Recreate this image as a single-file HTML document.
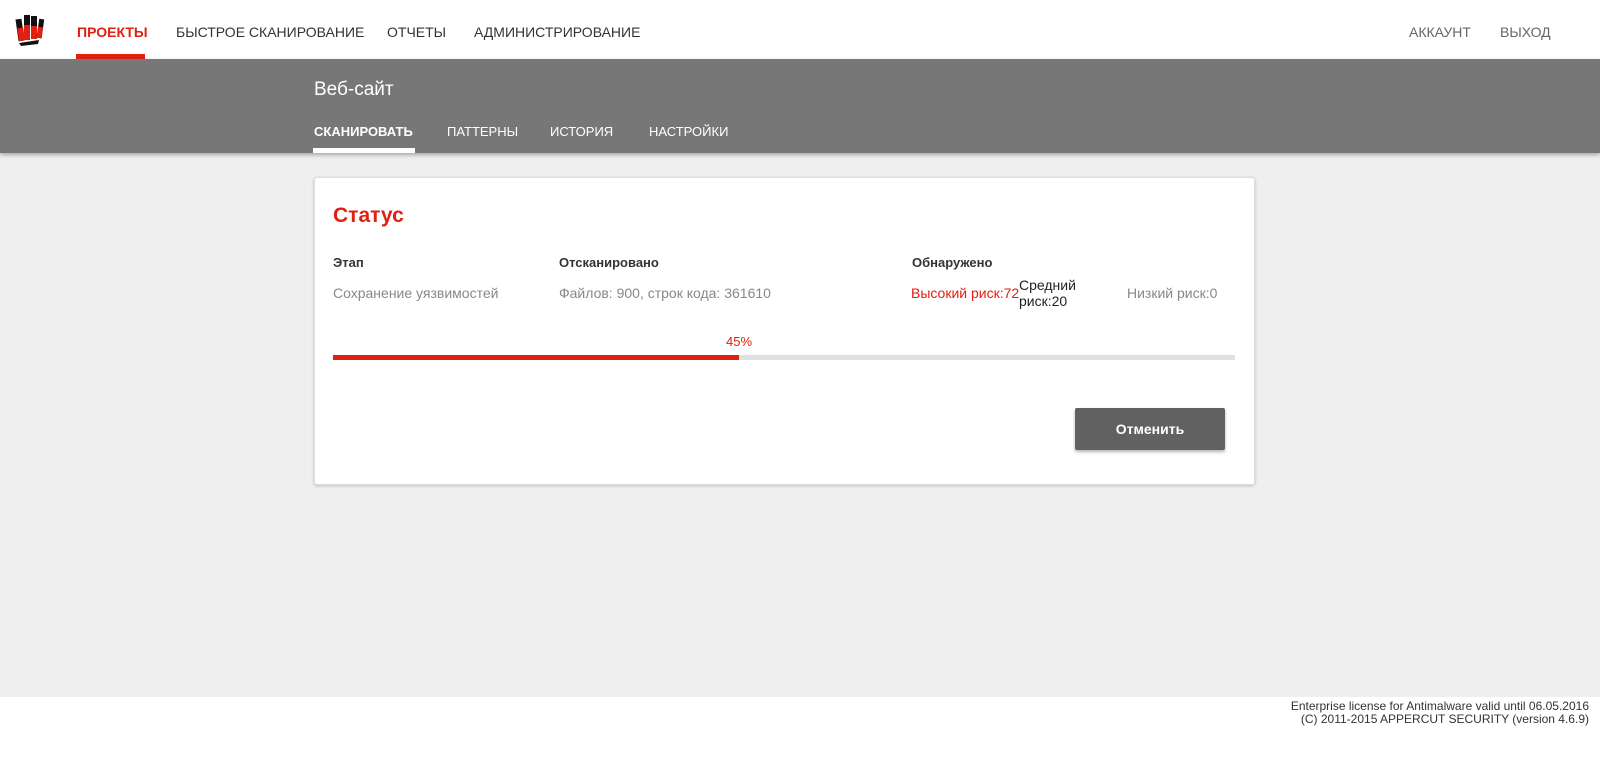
<!DOCTYPE html>
<html><head><meta charset="utf-8"><style>
*{margin:0;padding:0;box-sizing:border-box}
body{width:1600px;height:765px;background:#efefef;font-family:"Liberation Sans",Arial,sans-serif;position:relative;overflow:hidden}
.top{position:absolute;left:0;top:0;width:1600px;height:59px;background:#fff}
.top a{position:absolute;top:24px;font-size:14px;color:#333;text-decoration:none}
.sub{position:absolute;left:0;top:59px;width:1600px;height:94px;background:#777;box-shadow:0 2px 4px rgba(0,0,0,.3)}
.sub .t{position:absolute;left:314px;top:20px;color:#fff;font-size:19px}
.sub a{position:absolute;top:65px;color:#fff;font-size:13px}
.card{position:absolute;left:314px;top:177px;width:941px;height:308px;background:#fff;border:1px solid #ddd;border-radius:3px;box-shadow:0 1px 3px rgba(0,0,0,.2)}
.abs{position:absolute}
.h{font-weight:bold;font-size:13px;color:#333;top:77px}
.v{font-size:14px;color:#888;top:107px}
.foot{position:absolute;left:0;top:697px;width:1600px;height:68px;background:#fff}
.foot div{position:absolute;right:11px;top:3px;text-align:right;font-size:12px;color:#333;line-height:13px}
</style></head><body>
<div class="top">
<svg class="abs" style="left:15px;top:13px" width="32" height="34" viewBox="0 0 32 34">
<g><rect x="2" y="6" width="6" height="22" fill="#111" transform="rotate(-8 5 17)"/><rect x="2.5" y="15" width="6" height="13" fill="#e02010" transform="rotate(-8 5 17)"/>
<rect x="9" y="2" width="6" height="25" fill="#111"/><rect x="9" y="12" width="6" height="15" fill="#e02010"/>
<rect x="16" y="3" width="6" height="23" fill="#111"/><rect x="16" y="13" width="6" height="13" fill="#e02010"/>
<rect x="23" y="6" width="5" height="19" fill="#111" transform="rotate(8 25 15)"/><rect x="23" y="14" width="5" height="11" fill="#e02010" transform="rotate(8 25 15)"/>
<path d="M4 30 L24 27 L23 31 L6 33Z" fill="#111"/></g></svg>
<a style="left:77px;color:#e02010;font-weight:bold">ПРОЕКТЫ</a>
<div class="abs" style="left:76px;top:54px;width:69px;height:5px;background:#e02010"></div>
<a style="left:176px">БЫСТРОЕ СКАНИРОВАНИЕ</a>
<a style="left:387px">ОТЧЕТЫ</a>
<a style="left:474px">АДМИНИСТРИРОВАНИЕ</a>
<a style="left:1409px;color:#666">АККАУНТ</a>
<a style="left:1500px;color:#666">ВЫХОД</a>
</div>
<div class="sub">
<div class="t">Веб-сайт</div>
<a style="left:314px;font-weight:bold">СКАНИРОВАТЬ</a>
<div class="abs" style="left:313px;top:89px;width:102px;height:5px;background:#fff"></div>
<a style="left:447px">ПАТТЕРНЫ</a>
<a style="left:550px">ИСТОРИЯ</a>
<a style="left:649px">НАСТРОЙКИ</a>
</div>
<div class="card">
<div class="abs" style="left:18px;top:26px;font-size:21px;font-weight:bold;color:#e02010">Статус</div>
<div class="abs h" style="left:18px">Этап</div>
<div class="abs h" style="left:244px">Отсканировано</div>
<div class="abs h" style="left:597px">Обнаружено</div>
<div class="abs v" style="left:18px">Сохранение уязвимостей</div>
<div class="abs v" style="left:244px">Файлов: 900, строк кода: 361610</div>
<div class="abs v" style="left:596px;color:#e02010">Высокий риск:72</div>
<div class="abs" style="left:704px;top:99px;font-size:14px;color:#222;line-height:16px">Средний<br>риск:20</div>
<div class="abs v" style="left:812px">Низкий риск:0</div>
<div class="abs" style="left:411px;top:156px;font-size:13px;color:#e02010">45%</div>
<div class="abs" style="left:18px;top:177px;width:902px;height:5px;background:#e0e0e0"></div>
<div class="abs" style="left:18px;top:177px;width:406px;height:5px;background:#e02010"></div>
<div class="abs" style="left:760px;top:230px;width:150px;height:42px;background:#616161;border-radius:2px;box-shadow:0 2px 3px rgba(0,0,0,.3);color:#fff;font-weight:bold;font-size:14px;text-align:center;line-height:42px">Отменить</div>
</div>
<div class="foot"><div>Enterprise license for Antimalware valid until 06.05.2016<br>(C) 2011-2015 APPERCUT SECURITY (version 4.6.9)</div></div>
</body></html>
